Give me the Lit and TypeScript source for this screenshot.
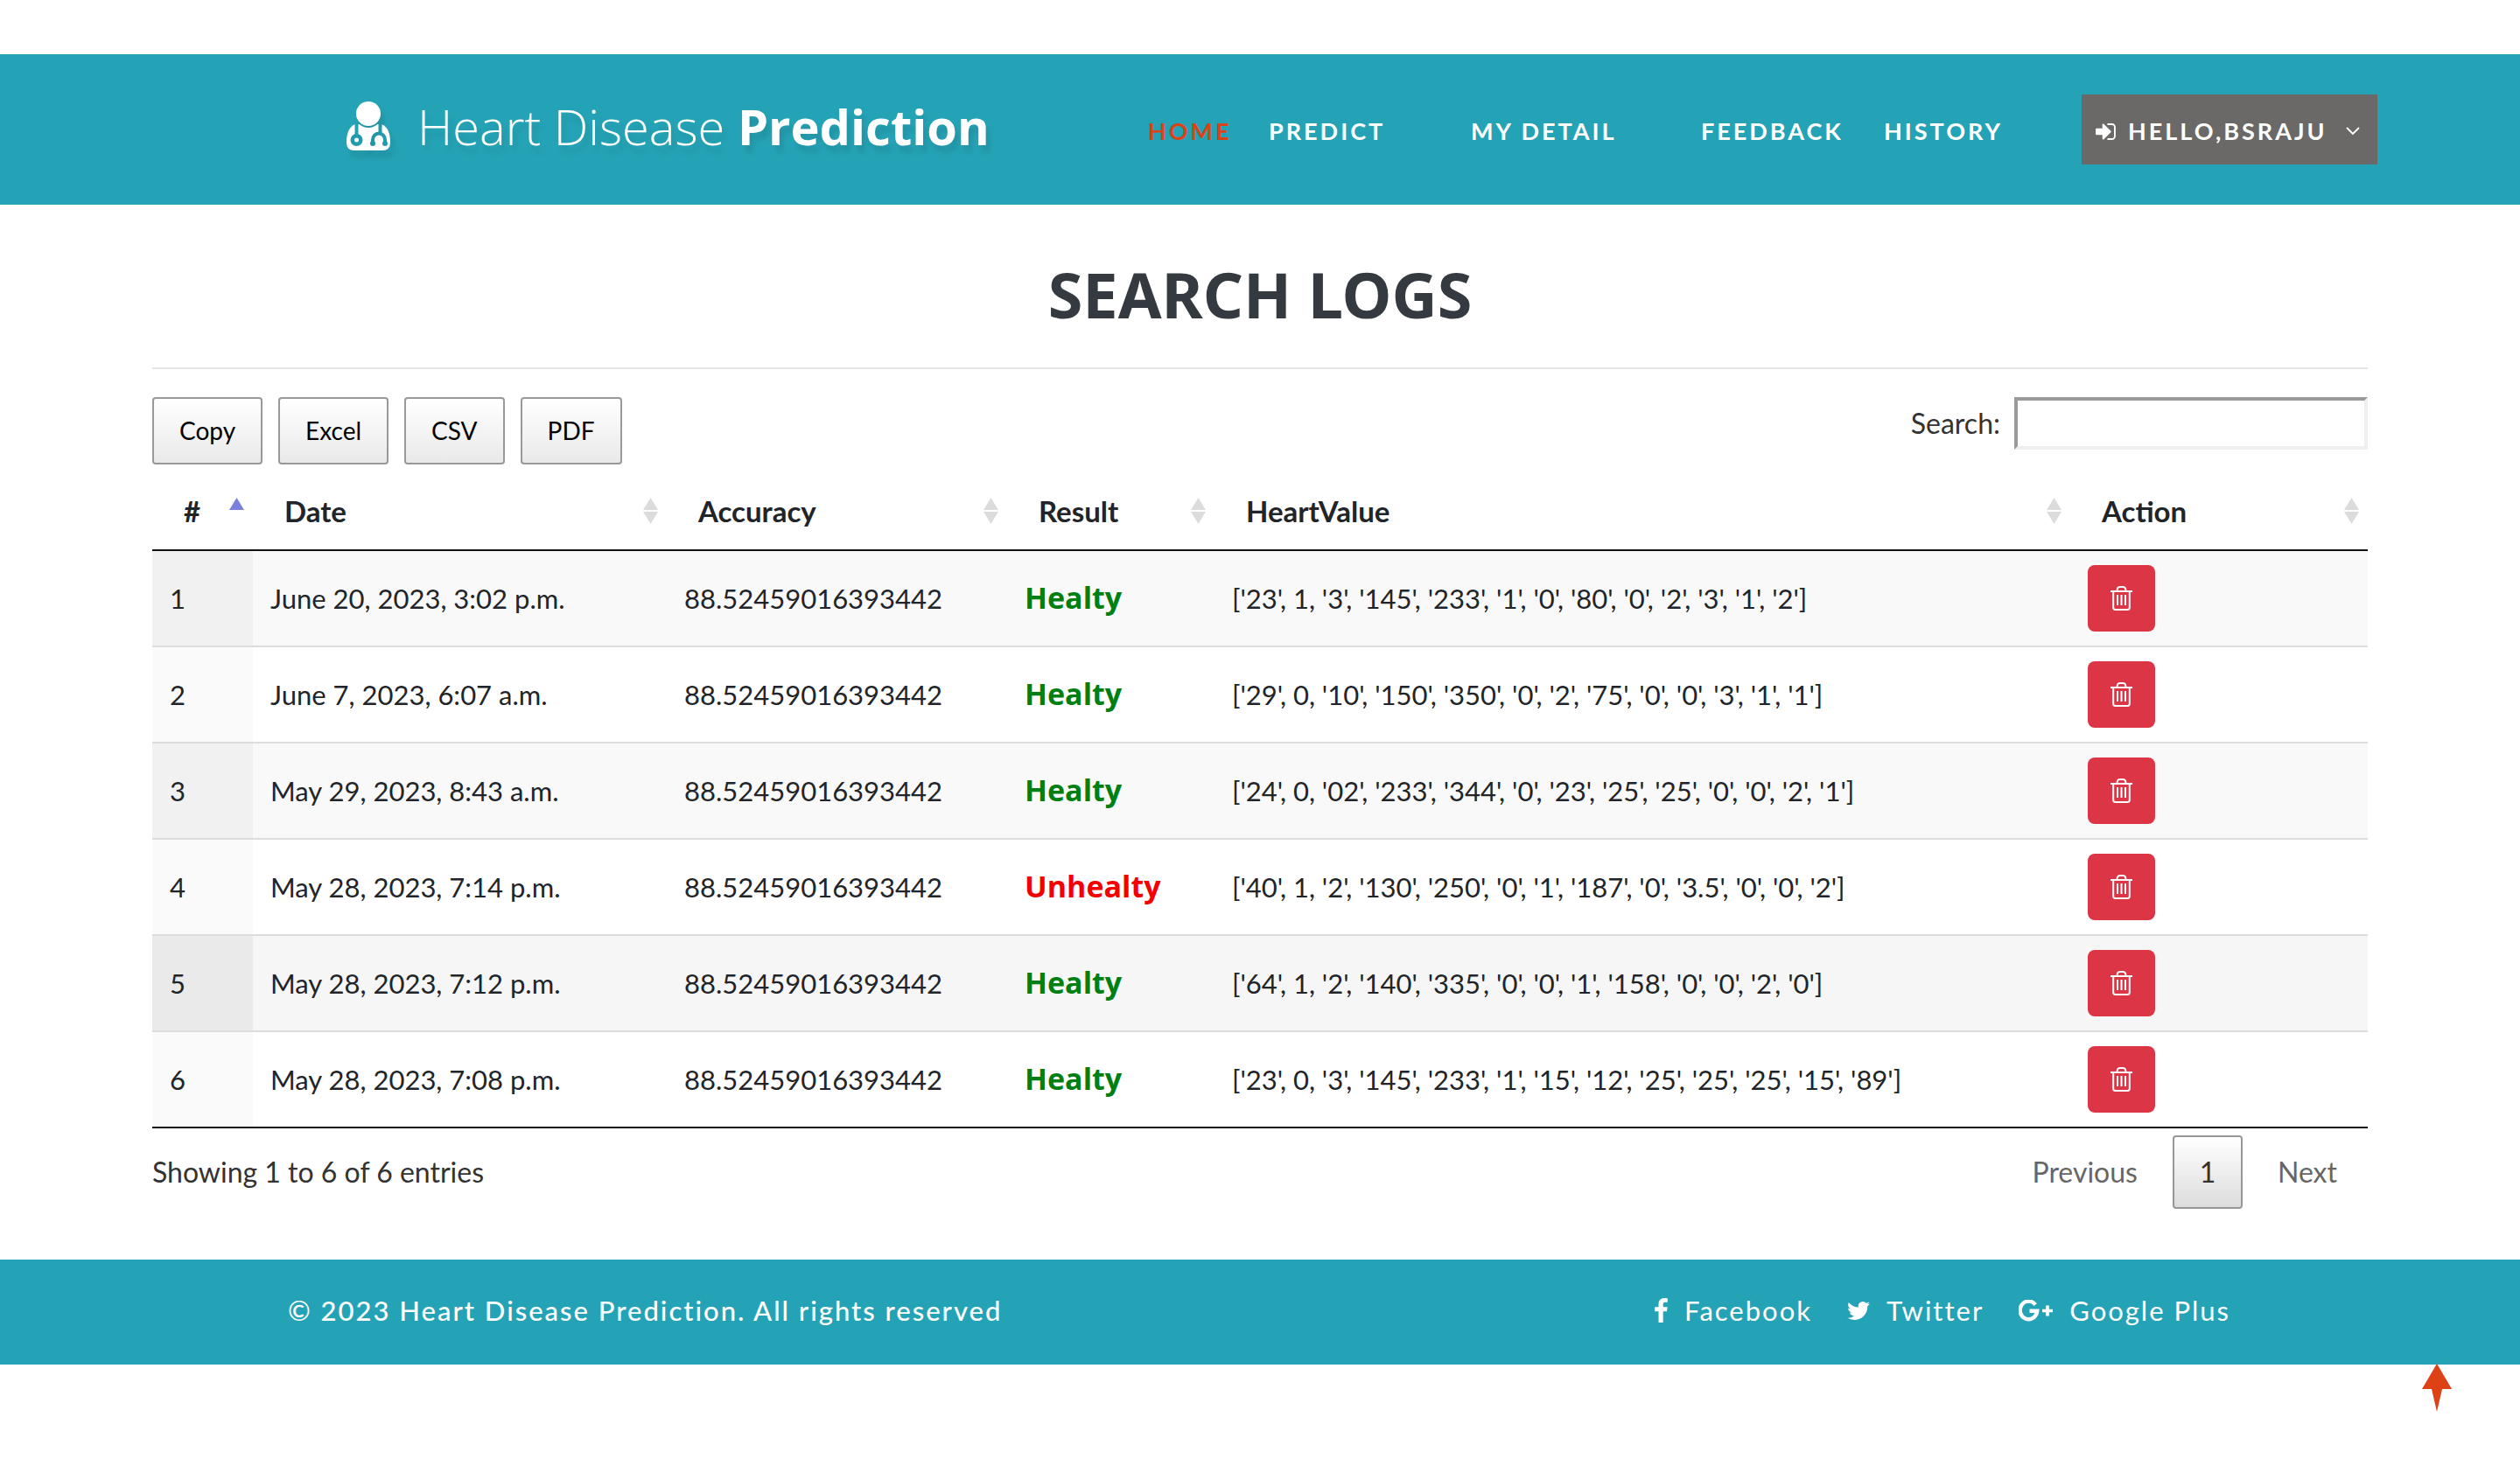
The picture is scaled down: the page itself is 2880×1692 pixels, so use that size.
import { LitElement, html, css, svg } from "lit";
import { customElement, state } from "lit/decorators.js";
import { classMap } from "lit/directives/class-map.js";

interface LogEntry {
  id: number;
  date: string;
  accuracy: string;
  healthy: boolean;
  values: string;
}

const ENTRIES: LogEntry[] = [
  { id: 1, date: "June 20, 2023, 3:02 p.m.", accuracy: "88.52459016393442", healthy: true, values: "['23', 1, '3', '145', '233', '1', '0', '80', '0', '2', '3', '1', '2']" },
  { id: 2, date: "June 7, 2023, 6:07 a.m.", accuracy: "88.52459016393442", healthy: true, values: "['29', 0, '10', '150', '350', '0', '2', '75', '0', '0', '3', '1', '1']" },
  { id: 3, date: "May 29, 2023, 8:43 a.m.", accuracy: "88.52459016393442", healthy: true, values: "['24', 0, '02', '233', '344', '0', '23', '25', '25', '0', '0', '2', '1']" },
  { id: 4, date: "May 28, 2023, 7:14 p.m.", accuracy: "88.52459016393442", healthy: false, values: "['40', 1, '2', '130', '250', '0', '1', '187', '0', '3.5', '0', '0', '2']" },
  { id: 5, date: "May 28, 2023, 7:12 p.m.", accuracy: "88.52459016393442", healthy: true, values: "['64', 1, '2', '140', '335', '0', '0', '1', '158', '0', '0', '2', '0']" },
  { id: 6, date: "May 28, 2023, 7:08 p.m.", accuracy: "88.52459016393442", healthy: true, values: "['23', 0, '3', '145', '233', '1', '15', '12', '25', '25', '25', '15', '89']" },
];

const COLUMNS = [
  { label: "#", cls: "c-id" },
  { label: "Date", cls: "c-date" },
  { label: "Accuracy", cls: "c-acc" },
  { label: "Result", cls: "c-res" },
  { label: "HeartValue", cls: "c-val" },
  { label: "Action", cls: "c-act" },
];

const doctorIcon = html`<svg class="doctor" viewBox="0 0 50 56" aria-hidden="true">
  <mask id="coat">
    <rect width="50" height="56" fill="#fff" />
    <circle cx="25" cy="14" r="16" fill="#000" />
    <path d="M11.5 24V38M38.500 24V36" stroke="#000" stroke-width="4" fill="none" />
    <circle cx="11.500" cy="44" r="7" fill="#000" />
    <circle cx="11.500" cy="44" r="2.500" fill="#fff" />
    <path d="M30 48V44a7 7.500 0 0 1 14 0v4" stroke="#000" stroke-width="4" fill="none" />
    <circle cx="30" cy="48" r="3" fill="#000" />
    <circle cx="44" cy="48" r="3" fill="#000" />
  </mask>
  <circle cx="25" cy="14" r="14" fill="#fff" />
  <path mask="url(#coat)" fill="#fff" d="M10 26C3 29 0 36 0 47Q0 56 9 56H41Q50 56 50 47C50 36 47 29 40 26Z" />
</svg>`;

const signInIcon = html`<svg class="signin" viewBox="0 256 1536 1280" aria-hidden="true"><path fill="currentColor" d="M1184 896q0 26-19 45l-544 544q-19 19-45 19t-45-19-19-45v-288h-448q-26 0-45-19t-19-45v-384q0-26 19-45t45-19h448v-288q0-26 19-45t45-19 45 19l544 544q19 19 19 45zm352-352v704q0 119-84.500 203.500t-203.500 84.500h-320q-13 0-22.500-9.500t-9.500-22.500q0-4-1-20t-.5-26.500 3-23.500 10-19.500 20.500-6.500h320q66 0 113-47t47-113v-704q0-66-47-113t-113-47h-312l-11.500-1-11.500-3-8-5.500-7-9-2-13.500q0-4-1-20t-.5-26.500 3-23.500 10-19.500 20.500-6.500h320q119 0 203.500 84.500t84.500 203.500z"/></svg>`;

const chevronIcon = html`<svg class="chevron" viewBox="0 0 16 10" aria-hidden="true"><path d="M1.500 1.500 8 8l6.500-6.500" fill="none" stroke="currentColor" stroke-width="1.800" stroke-linecap="round" /></svg>`;

const trashIcon = html`<svg class="trash" viewBox="0 0 25 28" aria-hidden="true">
  <g fill="none" stroke="currentColor" stroke-width="2">
    <path d="M0 6H25M7.500 6C7.500 2.500 8.500 1 10.500 1h4C16.500 1 17.500 2.500 17.500 6" />
    <path d="M3.200 6V24.500Q3.200 27 5.700 27H19.300Q21.800 27 21.800 24.500V6" />
    <path d="M8 10V22M12.500 10V22M17 10V22" />
  </g>
</svg>`;

const facebookIcon = html`<svg class="fb" viewBox="479 0 864 1664" aria-hidden="true"><path fill="currentColor" d="M1343 12v264h-157q-86 0-116 36t-30 108v189h293l-39 296h-254v759h-306v-759h-255v-296h255v-218q0-186 104-288.500t277-102.500q147 0 228 12z"/></svg>`;

const twitterIcon = html`<svg class="tw" viewBox="108 256 1576 1280" aria-hidden="true"><path fill="currentColor" d="M1684 408q-67 98-162 167 1 14 1 42 0 130-38 259.500t-115.500 248.500-184.500 210.500-258 146-323 54.500q-271 0-496-145 35 4 78 4 225 0 401-138-105-2-188-64.500t-114-159.500q33 5 61 5 43 0 85-11-112-23-185.500-111.500t-73.500-205.500v-4q68 38 146 41-66-44-105-115t-39-154q0-88 44-163 121 149 294.500 238.500t371.500 99.500q-8-38-8-74 0-134 94.500-228.500t228.500-94.500q140 0 236 102 109-21 205-78-37 115-142 178 93-10 186-50z"/></svg>`;

const googlePlusIcon = html`<svg class="gp" viewBox="0 0 39 25" aria-hidden="true">
  <path d="M19.200 5.600A9.800 10.300 0 1 0 21.200 12.800H12.500" fill="none" stroke="currentColor" stroke-width="4.400" />
  <path d="M27 12.500H39M33 6.500V18.500" stroke="currentColor" stroke-width="3.600" />
</svg>`;

@customElement("app-root")
export class AppRoot extends LitElement {
  @state() private query = "";
  @state() private activeRow = 5;

  static styles = css`
    :host {
      display: block;
      position: relative;
      box-sizing: border-box;
      min-height: 100vh;
      padding-top: 62px;
      background: #fff;
      color: #212529;
      font-family: Lato, "Open Sans", sans-serif;
      font-size: 31px;
      line-height: 48px;
    }
    *, *::before, *::after { box-sizing: border-box; }
    a { color: inherit; text-decoration: none; }
    button, input { font: inherit; color: inherit; margin: 0; }
    button { cursor: pointer; }
    svg { display: block; flex: none; }

    .header {
      display: flex;
      align-items: center;
      justify-content: space-between;
      min-height: 172px;
      padding: 0 163px 0 396px;
      background: #25a3b6;
      color: #fff;
    }
    .logo {
      display: flex;
      align-items: center;
      gap: 31px;
      padding-bottom: 8px;
      font: 300 56px/80px "Open Sans", "Noto Sans", sans-serif;
      text-shadow: 4px 8px 6px rgba(0, 0, 0, 0.1);
      white-space: nowrap;
    }
    .logo b { font-weight: 700; }
    .doctor {
      width: 50px;
      height: 56px;
      filter: drop-shadow(4px 8px 3px rgba(0, 0, 0, 0.1));
    }
    .nav {
      display: grid;
      grid-template-columns: 138px 231px 263px 209px 226px 338px;
      align-items: center;
      font-size: 27px;
      font-weight: 700;
      letter-spacing: 3px;
      white-space: nowrap;
    }
    .nav-link { padding-top: 4px; }
    .nav-link.active { color: #dd4116; }
    .user {
      display: flex;
      align-items: center;
      gap: 14px;
      height: 80px;
      padding: 4px 20px 0 16px;
      border: 0;
      background: #6a6967;
      color: #fff;
      letter-spacing: 3px;
    }
    .signin { width: 23px; height: 19px; }
    .chevron { width: 16px; height: 10px; margin-left: auto; }

    .main { padding: 58px 174px; }
    .title {
      margin: 0;
      padding-bottom: 40px;
      border-bottom: 2px solid #e5e5e5;
      color: #343a40;
      font: 700 72px/88px "Noto Sans", "Open Sans", sans-serif;
      text-align: center;
    }
    .toolbar {
      display: flex;
      justify-content: space-between;
      align-items: flex-start;
      margin-top: 32px;
    }
    .exports { display: flex; gap: 18px; }
    .export {
      height: 77px;
      padding: 0 29px 2px;
      border: 2px solid #999;
      border-radius: 4px;
      background: linear-gradient(to bottom, #fff, #e9e9e9);
      color: #000;
      font-size: 28px;
    }
    .search {
      display: flex;
      align-items: center;
      gap: 16px;
      color: #333;
      font-size: 32px;
    }
    .search-box {
      width: 404px;
      height: 60px;
      padding: 4px 8px;
      border: 4px solid;
      border-color: #9a9a9a #eee #eee #9a9a9a;
      border-radius: 0;
      background: #fff;
      outline: none;
    }

    .logs {
      width: 100%;
      margin-top: 10px;
      border-spacing: 0;
      table-layout: fixed;
      text-align: left;
      white-space: nowrap;
    }
    .c-id { width: 115px; }
    .c-date { width: 473px; }
    .c-acc { width: 389px; }
    .c-res { width: 237px; }
    .c-act { width: 340px; }
    .logs th { padding: 0; border-bottom: 2px solid #111; }
    .sort {
      display: flex;
      align-items: center;
      justify-content: space-between;
      width: 100%;
      height: 87px;
      padding: 0 10px 2px 36px;
      border: 0;
      background: none;
      font-size: 33px;
      font-weight: 700;
    }
    .arrows { width: 17px; height: 30px; fill: #dcdcdc; }
    .arrows.sorted { fill: #7b80dc; }
    .logs td {
      padding: 16px 20px;
      border-bottom: 2px solid #ddd;
      vertical-align: middle;
    }
    .row:nth-child(odd) td { background: #f9f9f9; }
    .row:nth-child(odd) .first { background: #f1f1f1; }
    .row:nth-child(even) .first { background: #fafafa; }
    .row.active td { background: #f6f6f6; }
    .row.active .first { background: #eaeaea; }
    .logs .row:last-child td { border-bottom-color: #111; }
    .logs .result {
      padding-bottom: 18px;
      color: #008012;
      font: 700 34px/48px "Open Sans", "Noto Sans", sans-serif;
    }
    .logs .result.bad { color: #f50000; }
    .delete {
      display: flex;
      align-items: center;
      justify-content: center;
      width: 77px;
      height: 76px;
      padding: 0;
      border: 0;
      border-radius: 8px;
      background: #dc3545;
      color: #fff;
    }
    .trash { width: 25px; height: 28px; }

    .summary {
      display: flex;
      align-items: center;
      justify-content: space-between;
      margin-top: 8px;
      color: #333;
      font-size: 32px;
    }
    .pages { display: flex; gap: 5px; }
    .page {
      min-width: 80px;
      height: 84px;
      padding: 0 33px;
      border: 2px solid transparent;
      border-radius: 4px;
      background: none;
      color: #666;
    }
    .page.current {
      padding: 0;
      border-color: #979797;
      background: linear-gradient(to bottom, #fff, #dcdcdc);
      color: #333;
    }

    .footer {
      display: flex;
      align-items: center;
      justify-content: space-between;
      min-height: 120px;
      padding: 0 331px 4px 329px;
      background: #25a3b6;
      color: #fff;
      letter-spacing: 2px;
    }
    .copyright { margin: 0; font-weight: 500; }
    .social { display: flex; gap: 40px; }
    .social-link { display: flex; align-items: center; gap: 19px; }
    .fb { width: 15px; height: 28px; }
    .tw { width: 26px; height: 21px; }
    .gp { width: 39px; height: 25px; }

    .to-top { position: absolute; right: 78px; bottom: 78px; }
    .to-top svg { width: 34px; height: 55px; }
  `;

  private sortIcon(sorted: boolean) {
    return html`<svg class=${classMap({ arrows: true, sorted })} viewBox="0 0 17 30" aria-hidden="true">
      <path d="M8.500 0 17 14H0Z" />
      ${sorted ? "" : svg`<path d="M8.500 30 17 16H0Z" />`}
    </svg>`;
  }

  private row(e: LogEntry) {
    return html`<tr class=${classMap({ row: true, active: e.id === this.activeRow })} @mouseenter=${() => (this.activeRow = e.id)}>
      <td class="first">${e.id}</td>
      <td>${e.date}</td>
      <td>${e.accuracy}</td>
      <td class=${classMap({ result: true, bad: !e.healthy })}>${e.healthy ? "Healty" : "Unhealty"}</td>
      <td>${e.values}</td>
      <td><button class="delete" type="button" aria-label="Delete entry ${e.id}">${trashIcon}</button></td>
    </tr>`;
  }

  render() {
    const q = this.query.toLowerCase();
    const rows = ENTRIES.filter((e) => `${e.id} ${e.date} ${e.accuracy} ${e.values}`.toLowerCase().includes(q));
    return html`
      <header class="header">
        <a class="logo" href="#">${doctorIcon}<span>Heart Disease <b>Prediction</b></span></a>
        <nav class="nav">
          <a class="nav-link active" href="#">HOME</a>
          <a class="nav-link" href="#">PREDICT</a>
          <a class="nav-link" href="#">MY DETAIL</a>
          <a class="nav-link" href="#">FEEDBACK</a>
          <a class="nav-link" href="#">HISTORY</a>
          <button class="user" type="button">${signInIcon}<span>HELLO,BSRAJU</span>${chevronIcon}</button>
        </nav>
      </header>
      <main class="main">
        <h1 class="title">SEARCH LOGS</h1>
        <div class="toolbar">
          <div class="exports">
            ${["Copy", "Excel", "CSV", "PDF"].map((t) => html`<button class="export" type="button">${t}</button>`)}
          </div>
          <div class="search">
            <label for="search">Search:</label>
            <input class="search-box" id="search" type="search" .value=${this.query}
              @input=${(ev: Event) => (this.query = (ev.target as HTMLInputElement).value)} />
          </div>
        </div>
        <table class="logs">
          <thead>
            <tr>
              ${COLUMNS.map((c, i) => html`<th class=${c.cls} scope="col"><button class="sort" type="button">${c.label}${this.sortIcon(i === 0)}</button></th>`)}
            </tr>
          </thead>
          <tbody>${rows.map((e) => this.row(e))}</tbody>
        </table>
        <div class="summary">
          <span>Showing 1 to ${rows.length} of ${rows.length} entries</span>
          <div class="pages">
            <button class="page" type="button">Previous</button>
            <button class="page current" type="button">1</button>
            <button class="page" type="button">Next</button>
          </div>
        </div>
      </main>
      <footer class="footer">
        <p class="copyright">© 2023 Heart Disease Prediction. All rights reserved</p>
        <div class="social">
          <a class="social-link" href="#">${facebookIcon}<span>Facebook</span></a>
          <a class="social-link" href="#">${twitterIcon}<span>Twitter</span></a>
          <a class="social-link" href="#">${googlePlusIcon}<span>Google Plus</span></a>
        </div>
      </footer>
      <a class="to-top" href="#" aria-label="Back to top">
        <svg viewBox="0 0 34 55" aria-hidden="true"><path fill="#dd4116" d="M17 0 34 29H23L17 55 11 29H0Z" /></svg>
      </a>
    `;
  }
}
